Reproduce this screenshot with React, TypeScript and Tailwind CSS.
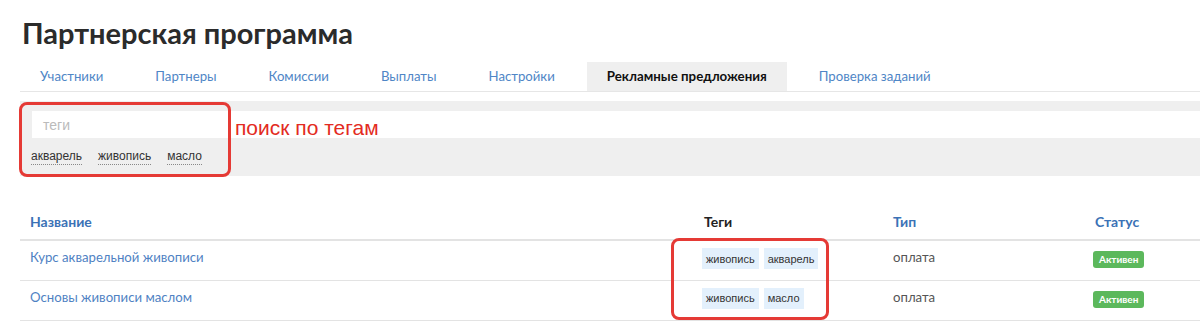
import React from 'react';

const tabs = ['Участники', 'Партнеры', 'Комиссии', 'Выплаты', 'Настройки', 'Рекламные предложения', 'Проверка заданий'];
const activeTab = 'Рекламные предложения';

const filterTags = ['акварель', 'живопись', 'масло'];

const offers = [
  { name: 'Курс акварельной живописи', tags: ['живопись', 'акварель'], type: 'оплата', status: 'Активен' },
  { name: 'Основы живописи маслом', tags: ['живопись', 'масло'], type: 'оплата', status: 'Активен' },
];

export default function App() {
  return (
    <div className="relative w-[1200px] h-[322px] overflow-hidden bg-white pl-5 font-['Lato',sans-serif]">
      <h1 className="pt-[17px] pl-[2px] text-[29px] leading-[32px] font-bold text-[#2b2b2b]">Партнерская программа</h1>

      {/* tabs */}
      <div className="mt-[13px] flex gap-[12px] border-b border-[#e6e6e6]">
        {tabs.map((tab) => (
          <div
            key={tab}
            className={
              tab === activeTab
                ? 'h-[29px] px-5 flex items-center bg-[#efefef] text-[13.3px] font-bold text-[#111]'
                : 'h-[29px] px-5 flex items-center text-[13.2px] text-[#4f86c6]'
            }
          >
            {tab}
          </div>
        ))}
      </div>

      {/* tag search */}
      <div className="mt-[9px] h-[75px] bg-[#efefef] pt-[10px] pl-3 font-['Liberation_Sans',Arial,sans-serif]">
        <div className="h-[27px] bg-white flex items-center pl-[11px] pt-[2px] text-[14px] text-[#bbbbbb]">теги</div>
        <div className="mt-[11px] -ml-px flex gap-4 text-[12px] text-[#333]">
          {filterTags.map((t) => (
            <span key={t} className="border-b border-dotted border-[#888] leading-[15px]">{t}</span>
          ))}
        </div>
      </div>

      {/* offers table */}
      <table className="mt-[24px] w-[1180px] border-collapse">
        <colgroup>
          <col className="w-[674px]" />
          <col className="w-[189px]" />
          <col className="w-[202px]" />
          <col />
        </colgroup>
        <thead>
          <tr className="h-[40px] border-b-2 border-[#e3e3e3] text-left text-[14px]">
            <th className="pl-[10px] pt-[3px] font-bold text-[#3b72b6]">Название</th>
            <th className="pl-[10px] pt-[3px] font-bold text-[#222]">Теги</th>
            <th className="pl-[10px] pt-[3px] font-bold text-[#3b72b6]">Тип</th>
            <th className="pl-[10px] pt-[3px] font-bold text-[#3b72b6]">Статус</th>
          </tr>
        </thead>
        <tbody className="text-[13.2px]">
          {offers.map((o) => (
            <tr key={o.name} className="h-[40px] border-b border-[#e3e3e3]">
              <td className="pl-[10px] pb-[4px] text-[#4f82c3]">{o.name}</td>
              <td className="pl-[8px] pb-[3px]">
                <div className="flex gap-[5px] font-['Liberation_Sans',Arial,sans-serif]">
                  {o.tags.map((t) => (
                    <span key={t} className="h-[21px] px-[4px] flex items-center bg-[#e3f0fc] text-[11px] text-[#333]">{t}</span>
                  ))}
                </div>
              </td>
              <td className="pl-[10px] pb-[4px] text-[#555]">{o.type}</td>
              <td className="pl-2 pb-[3px]">
                <span className="inline-flex h-[17px] px-[6px] items-center rounded-[3px] bg-[#5cb85c] text-[10px] font-bold text-white">{o.status}</span>
              </td>
            </tr>
          ))}
        </tbody>
      </table>

      {/* annotations */}
      <div className="absolute left-[19px] top-[102px] w-[212px] h-[75px] rounded-[8px] border-[3px] border-[#e53a35]" />
      <div className="absolute left-[235px] top-[114px] text-[21px] leading-[28px] text-[#e32b22] font-['Liberation_Sans',Arial,sans-serif]">поиск по тегам</div>
      <div className="absolute left-[671px] top-[238px] w-[158px] h-[82px] rounded-[8px] border-[3px] border-[#e53a35]" />
    </div>
  );
}
